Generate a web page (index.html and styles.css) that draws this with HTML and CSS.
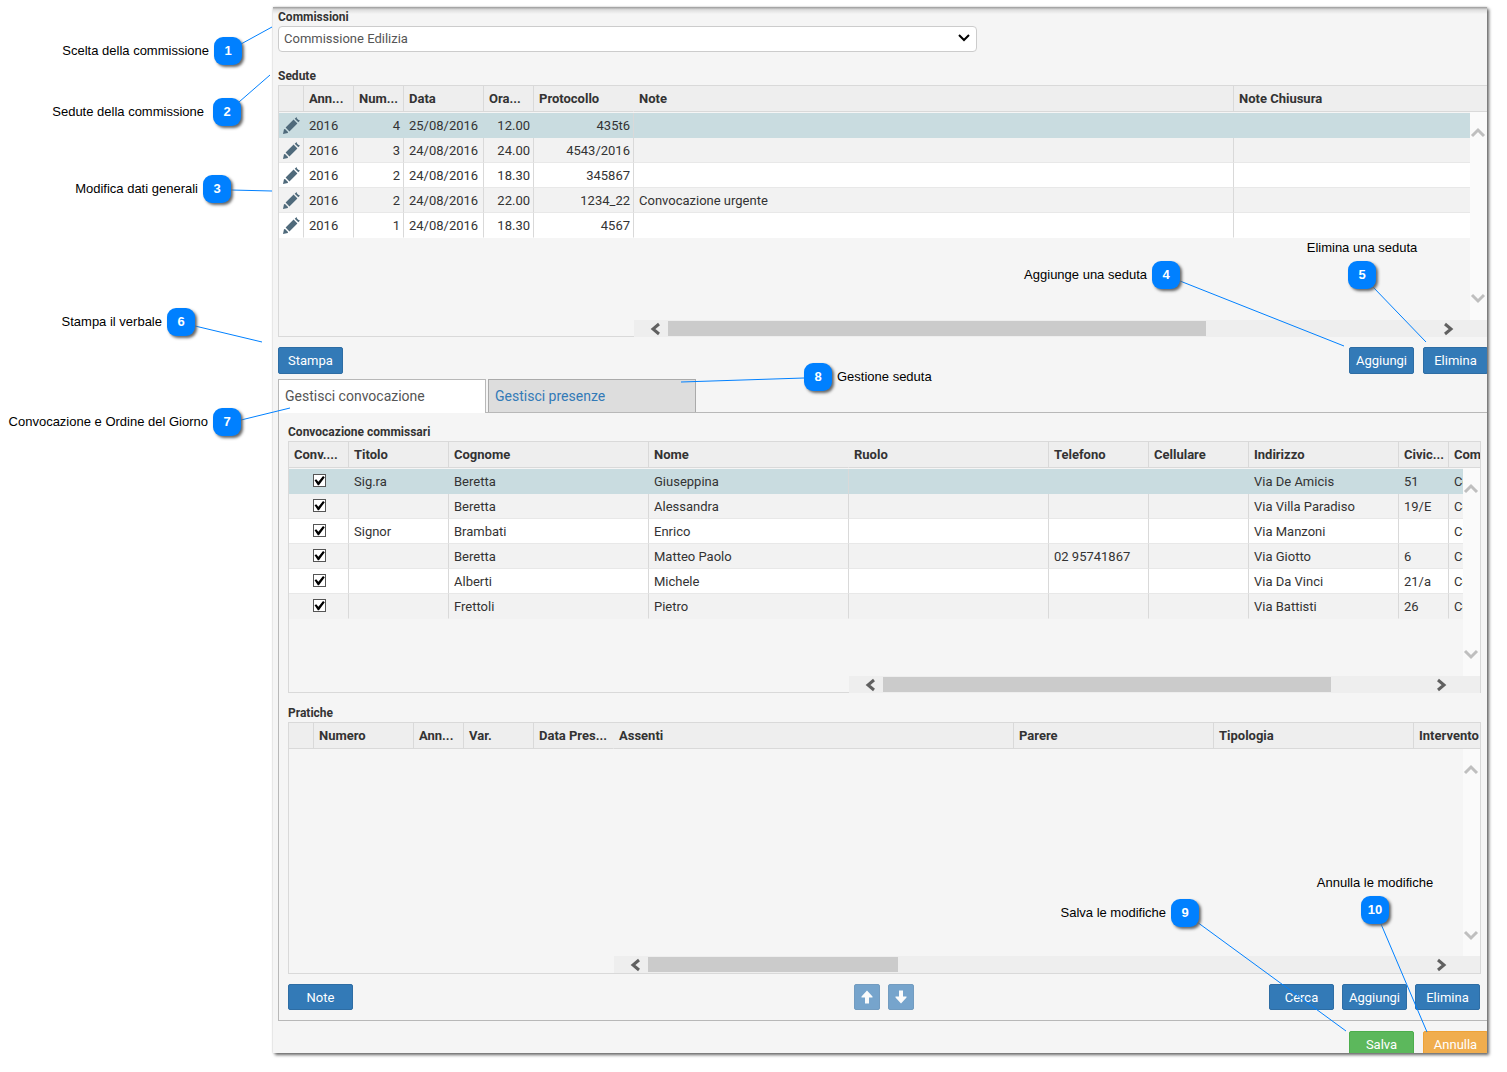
FILE: index.html
```html
<!DOCTYPE html>
<html lang="it">
<head>
  <meta charset="UTF-8" />
  <title>Gestione commissioni</title>
  <link rel="stylesheet" href="styles.css">
</head>
<body>

<svg class="defs" width="0" height="0" aria-hidden="true">
  <symbol id="pencil" viewBox="0 0 17 17">
    <path d="M0 17L1 12.2L2 12L5 15L4.800 16z" />
    <path d="M2.600 10.600L10.600 2.600L14.400 6.400L6.400 14.400z" />
    <path d="M11.700 1.700L13.600 0L14 1.400L15.600 3L17 3.500L15.300 5.300z" />
  </symbol>
  <symbol id="up" viewBox="0 0 16 16"><path d="M2 12L8 6L14 12" /></symbol>
  <symbol id="down" viewBox="0 0 16 16"><path d="M2 4L8 10L14 4" /></symbol>
  <symbol id="left" viewBox="0 0 16 16"><path d="M12 3L6 8L12 13" /></symbol>
  <symbol id="right" viewBox="0 0 16 16"><path d="M5 3L11 8L5 13" /></symbol>
</svg>

<main class="panel">
  <div class="content">
    <label class="title" for="commissione">Commissioni</label>
    <div class="select-box">
      <select id="commissione">
        <option>Commissione Edilizia</option>
      </select>
      <svg width="14" height="10" viewBox="0 0 14 10"><path d="M2 2L7 7L12 2" /></svg>
    </div>

    <h2 class="title sedute-title">Sedute</h2>
    <div class="grid">
      <table>
        <colgroup>
          <col class="w25"><col class="w50"><col class="w50"><col class="w80"><col class="w50"><col class="w100"><col class="w600"><col>
        </colgroup>
        <thead>
          <tr><th></th><th>Ann...</th><th>Num...</th><th>Data</th><th>Ora...</th><th class="frozen">Protocollo</th><th>Note</th><th>Note Chiusura</th></tr>
        </thead>
        <tbody>
          <tr class="selected">
            <td class="icon"><button aria-label="Modifica"><svg><use href="#pencil" /></svg></button></td>
            <td>2016</td><td class="num">4</td><td>25/08/2016</td><td class="num">12.00</td><td class="num frozen">435t6</td><td></td><td></td>
          </tr>
          <tr>
            <td class="icon"><button aria-label="Modifica"><svg><use href="#pencil" /></svg></button></td>
            <td>2016</td><td class="num">3</td><td>24/08/2016</td><td class="num">24.00</td><td class="num frozen">4543/2016</td><td></td><td></td>
          </tr>
          <tr>
            <td class="icon"><button aria-label="Modifica"><svg><use href="#pencil" /></svg></button></td>
            <td>2016</td><td class="num">2</td><td>24/08/2016</td><td class="num">18.30</td><td class="num frozen">345867</td><td></td><td></td>
          </tr>
          <tr>
            <td class="icon"><button aria-label="Modifica"><svg><use href="#pencil" /></svg></button></td>
            <td>2016</td><td class="num">2</td><td>24/08/2016</td><td class="num">22.00</td><td class="num frozen">1234_22</td><td>Convocazione urgente</td><td></td>
          </tr>
          <tr>
            <td class="icon"><button aria-label="Modifica"><svg><use href="#pencil" /></svg></button></td>
            <td>2016</td><td class="num">1</td><td>24/08/2016</td><td class="num">18.30</td><td class="num frozen">4567</td><td></td><td></td>
          </tr>
        </tbody>
      </table>
      <div class="vscroll">
        <button aria-label="Su"><svg><use href="#up" /></svg></button>
        <button aria-label="Giù"><svg><use href="#down" /></svg></button>
      </div>
      <div class="hscroll hscroll-sedute">
        <button aria-label="Sinistra"><svg><use href="#left" /></svg></button>
        <div class="track"><div class="thumb" style="width: 70%"></div></div>
        <button aria-label="Destra"><svg><use href="#right" /></svg></button>
      </div>
    </div>

    <div class="toolbar">
      <button class="btn">Stampa</button>
      <div class="group">
        <button class="btn">Aggiungi</button>
        <button class="btn">Elimina</button>
      </div>
    </div>

    <nav class="tabs">
      <a href="#convocazione" class="active">Gestisci convocazione</a>
      <a href="#presenze">Gestisci presenze</a>
    </nav>

    <section class="pane" id="convocazione">
      <h2 class="title">Convocazione commissari</h2>
      <div class="grid">
        <table>
          <colgroup>
            <col class="w60"><col class="w100"><col class="w200"><col class="w200"><col class="w200"><col class="w100"><col class="w100"><col class="w150"><col class="w50"><col>
          </colgroup>
          <thead>
            <tr><th>Conv....</th><th>Titolo</th><th>Cognome</th><th class="frozen">Nome</th><th>Ruolo</th><th>Telefono</th><th>Cellulare</th><th>Indirizzo</th><th>Civic...</th><th>Com</th></tr>
          </thead>
          <tbody>
            <tr class="selected">
              <td class="check"><input type="checkbox" aria-label="Convocato" checked></td>
              <td>Sig.ra</td><td>Beretta</td><td class="frozen">Giuseppina</td><td></td><td></td><td></td><td>Via De Amicis</td><td>51</td><td>Co</td>
            </tr>
            <tr>
              <td class="check"><input type="checkbox" aria-label="Convocato" checked></td>
              <td></td><td>Beretta</td><td class="frozen">Alessandra</td><td></td><td></td><td></td><td>Via Villa Paradiso</td><td>19/E</td><td>Co</td>
            </tr>
            <tr>
              <td class="check"><input type="checkbox" aria-label="Convocato" checked></td>
              <td>Signor</td><td>Brambati</td><td class="frozen">Enrico</td><td></td><td></td><td></td><td>Via Manzoni</td><td></td><td>Co</td>
            </tr>
            <tr>
              <td class="check"><input type="checkbox" aria-label="Convocato" checked></td>
              <td></td><td>Beretta</td><td class="frozen">Matteo Paolo</td><td></td><td>02 95741867</td><td></td><td>Via Giotto</td><td>6</td><td>Ca</td>
            </tr>
            <tr>
              <td class="check"><input type="checkbox" aria-label="Convocato" checked></td>
              <td></td><td>Alberti</td><td class="frozen">Michele</td><td></td><td></td><td></td><td>Via Da Vinci</td><td>21/a</td><td>Co</td>
            </tr>
            <tr>
              <td class="check"><input type="checkbox" aria-label="Convocato" checked></td>
              <td></td><td>Frettoli</td><td class="frozen">Pietro</td><td></td><td></td><td></td><td>Via Battisti</td><td>26</td><td>Co</td>
            </tr>
          </tbody>
        </table>
        <div class="vscroll">
          <button aria-label="Su"><svg><use href="#up" /></svg></button>
          <button aria-label="Giù"><svg><use href="#down" /></svg></button>
        </div>
        <div class="hscroll hscroll-commissari">
          <button aria-label="Sinistra"><svg><use href="#left" /></svg></button>
          <div class="track"><div class="thumb" style="width: 82%"></div></div>
          <button aria-label="Destra"><svg><use href="#right" /></svg></button>
        </div>
      </div>

      <h2 class="title pratiche-title">Pratiche</h2>
      <div class="grid">
        <table>
          <colgroup>
            <col class="w25"><col class="w100"><col class="w50"><col class="w70"><col class="w80"><col class="w400"><col class="w200"><col class="w200"><col>
          </colgroup>
          <thead>
            <tr><th></th><th>Numero</th><th>Ann...</th><th>Var.</th><th class="frozen">Data Pres...</th><th>Assenti</th><th>Parere</th><th>Tipologia</th><th>Intervento</th></tr>
          </thead>
        </table>
        <div class="vscroll">
          <button aria-label="Su"><svg><use href="#up" /></svg></button>
          <button aria-label="Giù"><svg><use href="#down" /></svg></button>
        </div>
        <div class="hscroll hscroll-pratiche">
          <button aria-label="Sinistra"><svg><use href="#left" /></svg></button>
          <div class="track"><div class="thumb" style="width: 32%"></div></div>
          <button aria-label="Destra"><svg><use href="#right" /></svg></button>
        </div>
      </div>

      <div class="actions">
        <div class="group"><button class="btn">Note</button></div>
        <div class="group">
          <button class="btn move" aria-label="Sposta su" disabled><svg width="12" height="14" viewBox="0 0 12 14"><path d="M6 0.500L11.500 6.500V7.500H8V13.500H4V7.500H0.500V6.500z" /></svg></button>
          <button class="btn move" aria-label="Sposta giù" disabled><svg width="12" height="14" viewBox="0 0 12 14"><path d="M6 13.500L11.500 7.500V6.500H8V0.500H4V6.500H0.500V7.500z" /></svg></button>
        </div>
        <div class="group end">
          <button class="btn">Cerca</button>
          <button class="btn">Aggiungi</button>
          <button class="btn">Elimina</button>
        </div>
      </div>
    </section>

    <div class="footer">
      <button class="btn save">Salva</button>
      <button class="btn cancel">Annulla</button>
    </div>
  </div>
</main>

<!-- numbered notes over the panel -->
<svg class="lines" aria-hidden="true">
  <path d="M241 44L272 27M239 102L270 75M231 190L272 191M1180 281L1344 346M1373 287L1426 342M195 326L262 342M241 420L290 408M681 382L804 378M1197 922L1346 1031M1381 924L1427 1032" />
</svg>
<div class="note n1"><span>Scelta della commissione</span><b>1</b></div>
<div class="note n2 wide"><span>Sedute della commissione</span><b>2</b></div>
<div class="note n3"><span>Modifica dati generali</span><b>3</b></div>
<div class="note n4"><span>Aggiunge una seduta</span><b>4</b></div>
<div class="note n5 top"><span>Elimina una seduta</span><b>5</b></div>
<div class="note n6"><span>Stampa il verbale</span><b>6</b></div>
<div class="note n7"><span>Convocazione e Ordine del Giorno</span><b>7</b></div>
<div class="note n8 after"><span>Gestione seduta</span><b>8</b></div>
<div class="note n9"><span>Salva le modifiche</span><b>9</b></div>
<div class="note n10 top"><span>Annulla le modifiche</span><b>10</b></div>

</body>
</html>
```
FILE: styles.css
```css
* {
  box-sizing: border-box;
}

body {
  position: relative;
  margin: 0;
  padding: 7px 20px 19px 273px;
  background: #fff;
  color: #333;
  font-family: Roboto, sans-serif;
  font-size: 13px;
}

button {
  font: inherit;
  cursor: pointer;
}

.defs {
  position: absolute;
}

.panel {
  position: relative;
  display: flow-root;
  background: #f5f5f5;
  overflow: hidden;
  box-shadow: 2px 2px 3px #666, 0 0 2px #ccc;
}

/* soft dark edge along the top */
.panel::before {
  content: "";
  position: absolute;
  top: 0;
  left: 0;
  right: 0;
  height: 7px;
  background: linear-gradient(#999, #ddd 40%, #f5f5f5);
}

/* the right edge runs under the panel border */
.content {
  position: relative;
  margin: 2px -1px 0 5px;
}

.title {
  display: block;
  margin: 0;
  font-size: 12px;
  font-weight: bold;
  line-height: 17px;
}

.sedute-title {
  margin-top: 16px;
}

.pratiche-title {
  margin-top: 12px;
}

.select-box {
  position: relative;
  max-width: 699px;
}

.select-box select {
  display: block;
  width: 100%;
  height: 26px;
  padding: 0 24px 2px 5px;
  appearance: none;
  background: #fff;
  border: 1px solid #ccc;
  border-radius: 4px;
  color: #555;
  font: inherit;
}

.select-box svg {
  position: absolute;
  top: 7px;
  right: 6px;
  fill: none;
  stroke: #000;
  stroke-width: 2;
  pointer-events: none;
}

/* grids */
.grid {
  position: relative;
  height: 252px;
  border: 1px solid #d9d9d9;
}

table {
  width: 100%;
  table-layout: fixed;
  border-spacing: 0;
}

.w25 { width: 25px; }
.w50 { width: 50px; }
.w60 { width: 60px; }
.w70 { width: 70px; }
.w80 { width: 80px; }
.w100 { width: 100px; }
.w150 { width: 150px; }
.w200 { width: 200px; }
.w400 { width: 400px; }
.w600 { width: 600px; }

th, td {
  padding: 0 0 0 5px;
  text-align: left;
  white-space: nowrap;
  overflow: hidden;
  border-right: 1px solid #d9d9d9;
}

th {
  height: 26px;
  background: #eee;
  border-bottom: 1px solid #d9d9d9;
  font-weight: bold;
}

th.frozen {
  border-right-color: #eee;
}

th:last-child, td:last-child {
  border-right: none;
}

tbody::before {
  content: "";
  display: block;
  height: 1px;
}

td {
  height: 25px;
  background: #fff;
  border-bottom: 1px solid #e8e8e8;
}

tbody tr:nth-child(even) td {
  background: #f2f2f2;
}

tbody tr.selected td {
  background: #c9dce0;
  border-color: #c9dce0;
}

tbody tr.selected td.frozen {
  border-right-color: #d9d9d9;
}

tbody tr:last-child td {
  border-bottom-color: transparent;
}

td.num {
  padding-right: 3px;
  text-align: right;
}

td.icon {
  padding-left: 4px;
}

td.icon button {
  display: block;
  padding: 0;
  border: none;
  background: none;
}

td.icon svg {
  display: block;
  width: 17px;
  height: 17px;
  fill: #4f6a7b;
}

td.check {
  padding: 0 0 3px 2px;
  text-align: center;
}

td.check input {
  display: inline-block;
  width: 13px;
  height: 13px;
  margin: 0;
  appearance: none;
  background: #fff;
  border: 1px solid #555;
  vertical-align: middle;
}

td.check input:checked::before {
  content: "";
  display: block;
  width: 11px;
  height: 11px;
  background: #000;
  clip-path: polygon(5% 48%, 20% 38%, 40% 60%, 82% 8%, 98% 20%, 45% 92%, 35% 92%);
}

/* scroll bars */
.vscroll, .hscroll {
  position: absolute;
  right: 0;
  display: flex;
  justify-content: space-between;
}

.vscroll {
  top: 26px;
  bottom: 16px;
  width: 17px;
  flex-direction: column;
  padding: 12px 1px 13px 0;
  background: #fafafa;
}

.hscroll {
  bottom: -1px;
  height: 17px;
  padding-right: 17px;
  background: #eee;
}

.hscroll-sedute { left: 355px; }
.hscroll-commissari { left: 560px; }
.hscroll-pratiche { left: 325px; bottom: 0; }

.vscroll button, .hscroll button {
  padding: 0;
  border: none;
  background: none;
}

.hscroll button {
  width: 34px;
  padding-left: 8px;
}

.hscroll button:last-child {
  padding: 0 10px 0 0;
}

.vscroll svg, .hscroll svg {
  display: block;
  width: 16px;
  height: 16px;
  margin: 0 auto;
  fill: none;
  stroke: #bfbfbf;
  stroke-width: 3;
}

.hscroll svg {
  stroke: #606060;
}

.track {
  flex: 1;
  padding: 1px 0;
}

.thumb {
  height: 15px;
  background: #cbcbcb;
}

/* buttons */
.btn {
  width: 65px;
  height: 26px;
  padding: 0;
  background: #337ab7;
  border: 1px solid #2e6da4;
  border-radius: 2px;
  color: #fff;
}

.toolbar {
  display: flex;
  justify-content: space-between;
  margin: 10px 0 5px;
}

.toolbar .btn {
  height: 27px;
}

.group {
  display: flex;
  gap: 8px;
}

.toolbar .group {
  gap: 9px;
}

.end {
  justify-content: flex-end;
}

.btn.move {
  width: 26px;
  opacity: 0.65;
  cursor: default;
}

.move svg {
  display: block;
  margin: 0 auto;
  fill: #fff;
}

.btn.save {
  background: #5cb85c;
  border-color: #4cae4c;
}

.btn.cancel {
  background: #f0ad4e;
  border-color: #eea236;
}

/* tabs */
.tabs {
  display: flex;
  gap: 2px;
  border-bottom: 1px solid #b8b8b8;
}

.tabs a {
  width: 208px;
  height: 33px;
  padding-left: 6px;
  line-height: 33px;
  background: #ddd;
  border: 1px solid #aaa;
  border-bottom: none;
  color: #337ab7;
  font-size: 14px;
  text-decoration: none;
}

.tabs a.active {
  height: 34px;
  margin-bottom: -1px;
  background: #fff;
  border-color: #b8b8b8;
  color: #555;
}

.pane {
  padding: 11px 7px 10px 9px;
  border: solid #b8b8b8;
  border-width: 0 0 1px 1px;
}

.actions {
  display: grid;
  grid-template-columns: 1fr auto 1fr;
  margin: 10px 1px 0 0;
}

/* only the upper part of the last buttons is visible */
.footer {
  display: flex;
  justify-content: flex-end;
  gap: 9px;
  height: 22px;
  margin-top: 10px;
}

/* notes */
.lines {
  position: absolute;
  top: 0;
  left: 0;
  width: 100%;
  height: 100%;
  fill: none;
  stroke: #0080ff;
  pointer-events: none;
}

.note {
  position: absolute;
  color: #000;
  font-family: "Liberation Sans", Arial, sans-serif;
  line-height: 28px;
}

.note b {
  display: block;
  width: 28px;
  height: 28px;
  background: #0080ff;
  border-radius: 9px;
  box-shadow: 2px 2px 3px #666;
  color: #fff;
  text-align: center;
}

.note span {
  position: absolute;
  right: 33px;
  white-space: nowrap;
}

.note.wide span {
  right: 37px;
}

.note.after span {
  right: auto;
  left: 33px;
}

.note.top span {
  right: auto;
  left: 50%;
  bottom: 27px;
  transform: translateX(-50%);
}

.n1 { left: 214px; top: 37px; }
.n2 { left: 213px; top: 98px; }
.n3 { left: 203px; top: 175px; }
.n4 { left: 1152px; top: 261px; }
.n5 { left: 1348px; top: 261px; }
.n6 { left: 167px; top: 308px; }
.n7 { left: 213px; top: 408px; }
.n8 { left: 804px; top: 363px; }
.n9 { left: 1171px; top: 899px; }
.n10 { left: 1361px; top: 896px; }
```
